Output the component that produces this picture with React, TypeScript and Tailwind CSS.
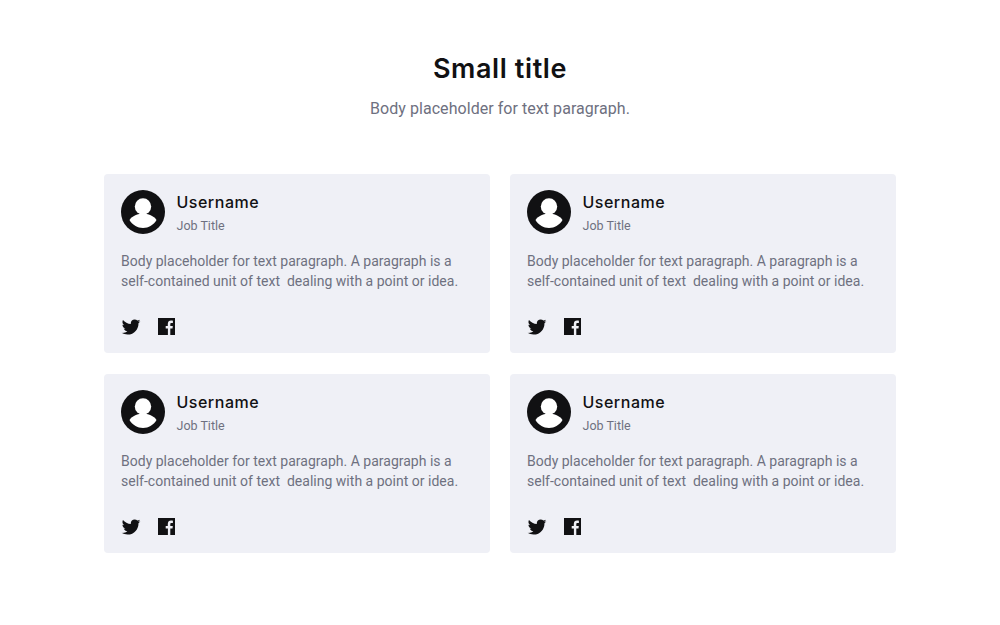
import { RiTwitterFill } from "react-icons/ri";

function Avatar() {
  return (
    <svg width="44" height="44" viewBox="0 0 44 44" className="shrink-0">
      <circle cx="22" cy="22" r="22" fill="#111113" />
      <circle cx="22" cy="16.500" r="8.200" fill="#fff" />
      <path d="M22 23.500c-5 0-11 2.500-13.500 6.500 2.500 4.500 8 8 13.500 8s11-3.500 13.500-8C33 26 27 23.500 22 23.500z" fill="#fff" />
    </svg>
  );
}

function FacebookBox() {
  return (
    <svg width="17" height="17" viewBox="0 0 17 17" fill="currentColor">
      <path d="M0 0h17v17h-4.700v-6.500h2.200l.3-2.600h-2.500V6.300c0-.8.2-1.300 1.300-1.300h1.300V2.700c-.3 0-1-.1-1.900-.1-1.900 0-3.200 1.200-3.200 3.300v2H7.700v2.600h2.200V17H0z" />
    </svg>
  );
}

function PersonCard() {
  return (
    <div className="h-[179px] rounded bg-[#eff0f6] pt-4 pl-[17px] pr-4">
      <div className="flex items-start gap-[11.500px]">
        <Avatar />
        <div>
          <div className="font-['Inter',sans-serif] text-[16px] leading-6 font-medium tracking-[0.5px] text-[#111113]">Username</div>
          <div className="mt-[3px] font-['Roboto',sans-serif] text-[12.500px] leading-[18px] text-[#6e7080]">Job Title</div>
        </div>
      </div>
      <p className="mt-[16px] font-['Roboto',sans-serif] text-[14px] leading-[20px] tracking-[0.01px] whitespace-pre-wrap text-[#6e7080]">
        Body placeholder for text paragraph. A paragraph is a{"\n"}self-contained unit of text  dealing with a point or idea.
      </p>
      <div className="mt-[24.500px] -ml-px flex items-center gap-4 text-[#111113]">
        <RiTwitterFill size={22} />
        <FacebookBox />
      </div>
    </div>
  );
}

export default function App() {
  return (
    <div className="min-h-[625px] bg-white pt-[52px]">
      <h1 className="text-center font-['Inter',sans-serif] text-[27px] leading-[34px] font-semibold tracking-[0.6px] text-[#111113]">Small title</h1>
      <p className="mt-[13px] text-center font-['Roboto',sans-serif] text-base leading-5 tracking-[0.05px] text-[#6e7080]">Body placeholder for text paragraph.</p>
      <div className="mx-auto mt-[55px] grid w-[792px] grid-cols-2 gap-x-5 gap-y-[21px]">
        <PersonCard />
        <PersonCard />
        <PersonCard />
        <PersonCard />
      </div>
    </div>
  );
}
